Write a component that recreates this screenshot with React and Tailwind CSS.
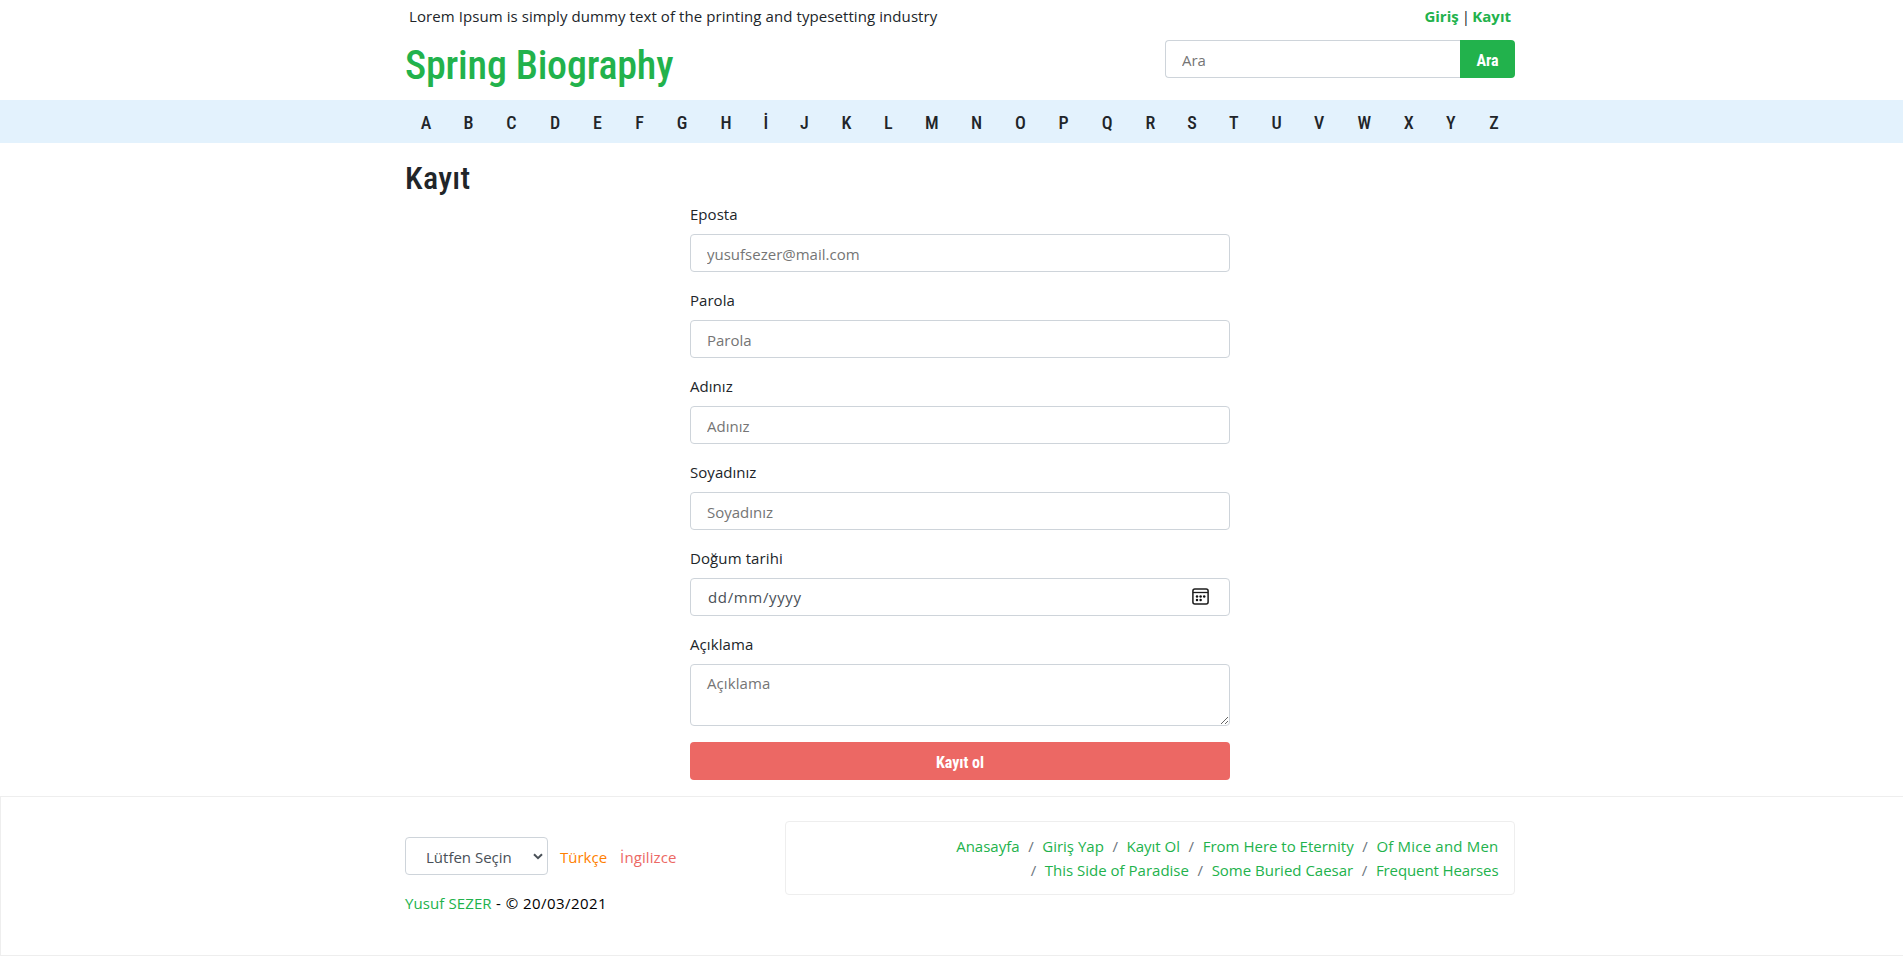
const LETTERS = [
  ['A', 426], ['B', 468.5], ['C', 511.3], ['D', 555], ['E', 597.4], ['F', 639.5], ['G', 682], ['H', 726],
  ['İ', 765.8], ['J', 804.5], ['K', 846.6], ['L', 888.3], ['M', 931.9], ['N', 976.5], ['O', 1020.4],
  ['P', 1063.7], ['Q', 1107.3], ['R', 1150.5], ['S', 1192.2], ['T', 1234], ['U', 1276.8], ['V', 1319.3],
  ['W', 1364.5], ['X', 1408.9], ['Y', 1451], ['Z', 1494.2],
];

const FIELDS = [
  { label: 'Eposta', placeholder: 'yusufsezer@mail.com', type: 'email' },
  { label: 'Parola', placeholder: 'Parola', type: 'password' },
  { label: 'Adınız', placeholder: 'Adınız', type: 'text' },
  { label: 'Soyadınız', placeholder: 'Soyadınız', type: 'text' },
];

const CRUMBS = [
  ['Anasayfa', 'tracking-normal'],
  ['Giriş Yap', 'tracking-normal'],
  ['Kayıt Ol', 'tracking-normal'],
  ['From Here to Eternity', 'tracking-normal'],
  ['Of Mice and Men', 'tracking-[0.2px]'],
  ['This Side of Paradise', 'tracking-normal'],
  ['Some Buried Caesar', 'tracking-normal'],
  ['Frequent Hearses', 'tracking-[-0.1px]'],
];

const HEADING = "font-['Roboto',sans-serif] [font-stretch:75%]";
const CONTROL = 'block h-[38px] w-full rounded border border-[#ced4da] bg-white px-4 pt-[7px] pb-[5px] leading-6 text-[#495057] placeholder:text-[#757575] placeholder:opacity-100 outline-none';

function CalendarIcon() {
  return (
    <svg width="17" height="17" viewBox="0 0 17 17" fill="none" className="mb-0.5">
      <rect x="0.9" y="0.9" width="15.2" height="15.2" rx="2" stroke="#1c1c1c" strokeWidth="1.5" />
      <path d="M1 4.5h15" stroke="#1c1c1c" strokeWidth="1.3" />
      <g fill="#111">
        <circle cx="5" cy="8.6" r="1.25" />
        <circle cx="8.6" cy="8.6" r="1.25" />
        <circle cx="12.2" cy="8.6" r="1.25" />
        <circle cx="5" cy="12.1" r="1.25" />
        <circle cx="8.6" cy="12.1" r="1.25" />
      </g>
    </svg>
  );
}

function Header() {
  return (
    <header className="mx-auto h-[100px] w-[1110px] pt-1">
      <div className="flex h-6 justify-between pr-1 pl-1">
        <p className="tracking-[0.08px]">Lorem Ipsum is simply dummy text of the printing and typesetting industry</p>
        <p className="whitespace-pre">
          <a className="font-bold text-[#22b24c]">Giriş</a>
          <span className="tracking-[-0.8px]"> | </span>
          <a className="font-bold text-[#22b24c]">Kayıt</a>
        </p>
      </div>
      <div className="flex items-start justify-between pt-3">
        <h1 className={`${HEADING} pt-0.5 text-[40px] leading-[48px] font-medium tracking-[-0.2px] text-[#22b24c]`}>Spring Biography</h1>
        <form className="flex w-[350px]">
          <input className={`${CONTROL} flex-1 rounded-r-none border-r-0`} placeholder="Ara" />
          <button type="button" className={`${HEADING} h-[38px] w-[55px] rounded-r bg-[#22b24c] pt-[3px] text-base font-bold text-white`}>Ara</button>
        </form>
      </div>
    </header>
  );
}

function LetterNav() {
  return (
    <nav className={`${HEADING} flex h-[43px] items-center bg-[#e3f2fd] pt-[3px] text-[18px] leading-6 font-medium`}>
      {LETTERS.map(([letter, center], i) => (
        <a key={letter} className="flex w-0 justify-center" style={{ marginLeft: center - (i ? LETTERS[i - 1][1] : 0) }}>
          {letter}
        </a>
      ))}
    </nav>
  );
}

function RegisterForm() {
  return (
    <main className="mx-auto h-[653px] w-[1110px] pt-4">
      <h2 className={`${HEADING} h-[43px] text-[32px] leading-[38px] font-medium tracking-[0.3px]`}>Kayıt</h2>
      <form className="mx-auto w-[540px]">
        {FIELDS.map((f) => (
          <div key={f.label} className="mb-4">
            <label className="mb-2 block tracking-[0.04px]">{f.label}</label>
            <input type={f.type} className={CONTROL} placeholder={f.placeholder} />
          </div>
        ))}
        <div className="mb-4">
          <label className="mb-2 block tracking-[0.1px]">Doğum tarihi</label>
          <div className="flex h-[38px] items-center justify-between rounded border border-[#ced4da] pr-5 pl-[17px] leading-6 text-[#495057]">
            <span className="tracking-[0.65px]">dd/mm/yyyy</span>
            <CalendarIcon />
          </div>
        </div>
        <div className="mb-4">
          <label className="mb-2 block tracking-[0.08px]">Açıklama</label>
          <textarea
            className="block h-[62px] w-full resize rounded border border-[#ced4da] px-4 pt-[6px] leading-6 tracking-[0.08px] outline-none placeholder:text-[#757575] placeholder:opacity-100"
            placeholder="Açıklama"
          />
        </div>
        <button type="button" className={`${HEADING} block h-[38px] w-full rounded bg-[#ec6864] pt-[3px] text-base font-bold text-white`}>
          Kayıt ol
        </button>
      </form>
    </main>
  );
}

function Footer() {
  return (
    <footer className="h-[160px] border border-[#eeeeee] pt-6">
      <div className="mx-auto flex w-[1110px] items-start justify-between">
        <div className="pt-4">
          <div className="flex items-center">
            <button type="button" className="flex h-[38px] w-[143px] items-center justify-between rounded border border-[#ced4da] pt-px pr-[4px] pl-5 text-[#495057]">
              Lütfen Seçin
              <svg width="10" height="7" viewBox="0 0 10 7" fill="none" className="mb-px">
                <path d="M1 1.2l4 4 4-4" stroke="#495057" strokeWidth="2" />
              </svg>
            </button>
            <a className="pt-px pl-3 text-[#ff7f00]">Türkçe</a>
            <a className="pt-px pl-[13px] tracking-[0.1px] text-[#ec6864]">İngilizce</a>
          </div>
          <p className="pt-4 whitespace-pre text-black">
            <a className="tracking-[0.1px] text-[#22b24c]">Yusuf SEZER</a>
            <span className="tracking-[0.45px]"> - © 20/03/2021</span>
          </p>
        </div>
        <ol className="flex h-[74px] w-[730px] flex-wrap justify-end rounded border border-[#eeeeee] py-3 pr-[15.5px] pl-4">
          {CRUMBS.map(([name, tracking], i) => (
            <li key={name} className="flex">
              {i > 0 && <span className="w-[22.7px] text-center text-[#6c757d]">/</span>}
              <a className={`${tracking} text-[#22b24c]`}>{name}</a>
            </li>
          ))}
        </ol>
      </div>
    </footer>
  );
}

export default function App() {
  return (
    <div className="h-[956px] overflow-hidden bg-white">
      <div className="w-[1920px] font-['Open_Sans',sans-serif] text-[15px] leading-6 text-[#212529]">
        <Header />
        <LetterNav />
        <RegisterForm />
        <Footer />
      </div>
    </div>
  );
}
